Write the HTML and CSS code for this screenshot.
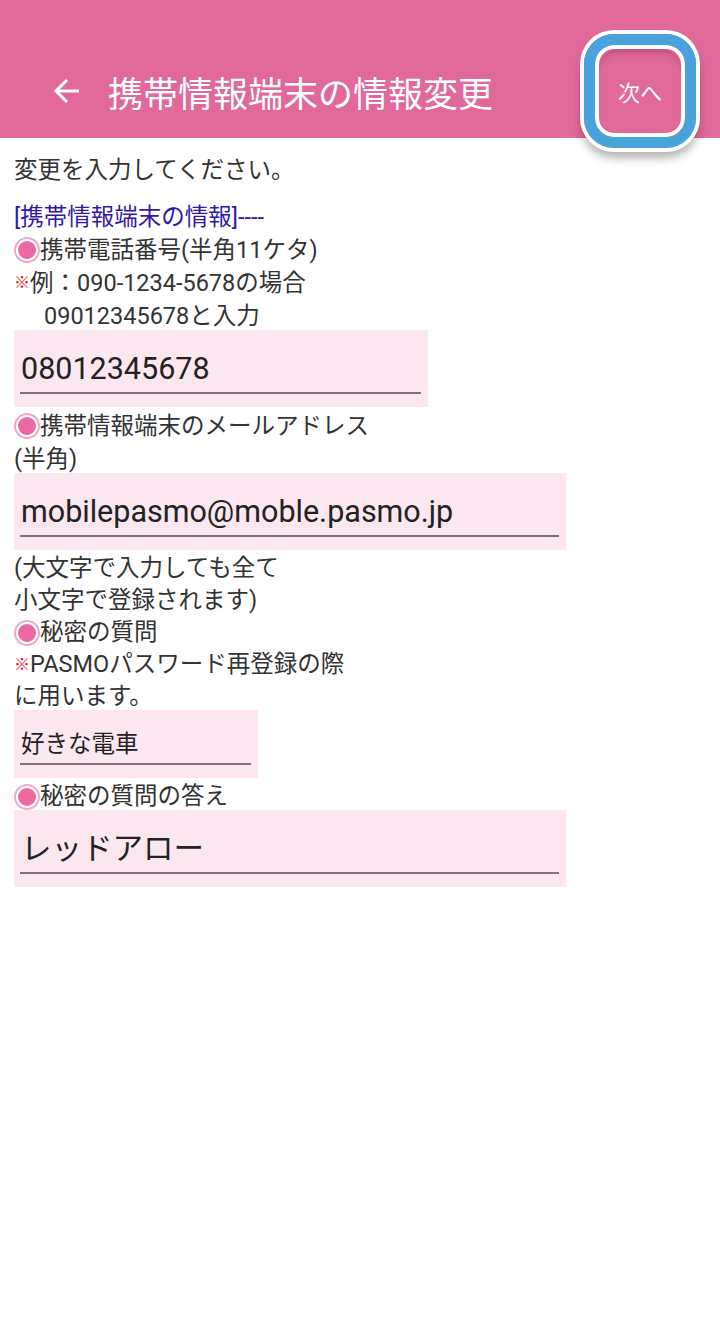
FILE: index.html
```html
<!DOCTYPE html>
<html lang="ja">
<head>
<meta charset="utf-8">
<link rel="stylesheet" href="styles.css">
</head>
<body>
<header class="appbar">
  <svg class="back" width="28" height="28" viewBox="0 0 28 28"><path d="M26 14H4M14 3L3 14L14 25" fill="none" stroke="#fff" stroke-width="3"/></svg>
  <h1 class="title">携帯情報端末の情報変更</h1>
  <div class="next-wrap">
    <button class="next">次へ</button>
    <div class="ring"></div>
  </div>
</header>
<main class="content">
  <p class="line intro">変更を入力してください。</p>
  <p class="line section">[携帯情報端末の情報]----</p>
  <p class="line"><span class="dot"></span>携帯電話番号(半角11ケタ)</p>
  <p class="line"><span class="kome">※</span>例：090-1234-5678の場合</p>
  <p class="line indent">09012345678と入力</p>
  <div class="field w1"><span class="val big">08012345678</span></div>
  <p class="line"><span class="dot"></span>携帯情報端末のメールアドレス</p>
  <p class="line">(半角)</p>
  <div class="field w2"><span class="val big">mobilepasmo@moble.pasmo.jp</span></div>
  <p class="line tight">(大文字で入力しても全て</p>
  <p class="line tight">小文字で登録されます)</p>
  <p class="line tight"><span class="dot"></span>秘密の質問</p>
  <p class="line tight"><span class="kome">※</span>PASMOパスワード再登録の際</p>
  <p class="line tight">に用います。</p>
  <div class="field w3 small"><span class="val">好きな電車</span></div>
  <p class="line tight"><span class="dot"></span>秘密の質問の答え</p>
  <div class="field w2"><span class="val big">レッドアロー</span></div>
</main>
</body>
</html>
```
FILE: styles.css
```css
html, body {
  margin: 0;
  padding: 0;
  background: #fff;
}
body {
  font-family: Roboto, "Noto Sans CJK JP", sans-serif;
  color: #333;
}
.appbar {
  height: 138px;
  background: #e0699a;
  display: flex;
  align-items: center;
  padding-left: 53px;
  padding-top: 44px;
  box-sizing: border-box;
  position: relative;
}
.back {
  display: block;
  width: 28px;
  height: 28px;
}
.title {
  margin: 0 0 0 27px;
  font-size: 35px;
  font-weight: 400;
  color: #fff;
  flex: 1;
  white-space: nowrap;
}
.next-wrap {
  position: relative;
  width: 82px;
  height: 84px;
  margin-right: 39px;
  flex: none;
}
.next {
  display: block;
  width: 100%;
  height: 100%;
  border: 0;
  background: #e0699a;
  color: #fff;
  font-family: "Noto Sans CJK JP", sans-serif;
  font-size: 22px;
  padding: 0;
  border-radius: 20px;
  box-shadow: inset 0 7px 6px -4px rgba(120, 30, 70, 0.35);
}
.ring {
  position: absolute;
  left: -15px;
  top: -15px;
  right: -15px;
  bottom: -15px;
  border: 11px solid #48a3dd;
  border-radius: 30px;
  box-shadow: 0 0 0 4px #fff, inset 0 0 0 4px #fff, 0 8px 10px 2px rgba(0, 0, 0, 0.3);
}
.content {
  padding: 13px 14px 0;
}
.line {
  margin: 0;
  font-size: 23.5px;
  line-height: 28px;
  padding-top: 5px;
  color: #333;
  display: flex;
  align-items: center;
  white-space: nowrap;
}
.line.tight {
  line-height: 27px;
}
.intro {
  margin-bottom: 14px;
}
.section {
  color: #3318a8;
}
.indent {
  padding-left: 30px;
}
.dot {
  width: 18px;
  height: 18px;
  border-radius: 50%;
  background: #ec6aa1;
  border: 2px solid #fff;
  box-shadow: 0 0 0 2px #f4a9c8;
  margin: 0 2px 0 2px;
  flex: none;
}
.kome {
  color: #e8111d;
  font-size: 16px;
  margin-right: 0;
}
.field {
  background: #fce6ef;
  height: 77px;
  box-sizing: border-box;
  padding: 0 7px 13px 6px;
  display: flex;
  flex-direction: column;
  justify-content: flex-end;
}
.field .val {
  border-bottom: 2px solid #7a7478;
  color: #222;
  padding-left: 1px;
  line-height: 46px;
  white-space: nowrap;
}
.val.big {
  font-size: 30.5px;
}
.field.small {
  height: 68px;
  padding-bottom: 13px;
}
.field.small .val {
  font-size: 23.5px;
  line-height: 38px;
}
.w1 { width: 414px; }
.w2 { width: 552px; }
.w3 { width: 244px; }
```
